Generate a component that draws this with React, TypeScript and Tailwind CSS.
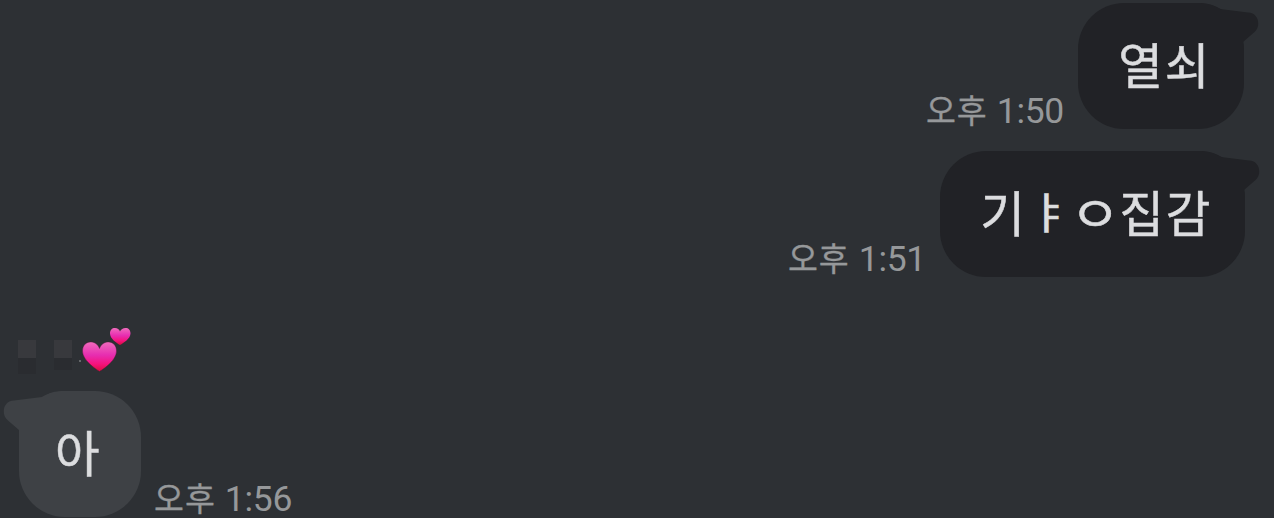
import React from 'react';
import clsx from 'clsx';

interface MessageProps {
  text: string;
  time: string;
  mine?: boolean;
  className?: string;
}

function BubbleTail({ mine }: { mine?: boolean }) {
  return (
    <svg
      viewBox="0 0 62 48"
      className={clsx(
        'absolute top-0 w-[62px] h-12',
        mine ? '-right-[15px] text-[#212226]' : '-left-4 -scale-x-100 text-[#3e4145]'
      )}
    >
      <path
        d="M0 0C11 0 16 2 23 6L51 9.500C58 10 61 14.500 61.200 20C61.400 24 60 27 57 29.500L46 39V48H0Z"
        fill="currentColor"
      />
    </svg>
  );
}

function Time({ time }: { time: string }) {
  return (
    <div className="flex items-baseline h-[40px] leading-[40px] text-[#96989a] whitespace-pre">
      <span className="text-[32.5px] tracking-[1px] [-webkit-text-stroke:0.3px_#96989a] font-['Noto_Sans_CJK_KR',sans-serif]">
        오후
      </span>
      <span className="text-[35.5px] ml-[9px] font-['Roboto',sans-serif] tracking-[-0.3px]">{time}</span>
    </div>
  );
}

function Message({ text, time, mine, className }: MessageProps) {
  return (
    <div className={clsx('flex items-end', mine && 'flex-row-reverse', className)}>
      <div
        className={clsx(
          'relative shrink-0 h-[126px] flex items-center rounded-[46px] pb-[6px]',
          mine ? 'justify-end pr-[33px] bg-[#212226]' : 'pl-[36px] bg-[#3e4145]',
          text.length === 1 && 'w-[122px]',
          text.length === 2 && 'w-[166px]',
          text.length > 2 && 'w-[305px]'
        )}
      >
        <BubbleTail mine={mine} />
        <span className="relative text-[48.5px] leading-[60px] tracking-[1.7px] whitespace-nowrap text-[#dcdddf] [-webkit-text-stroke:0.5px_#dcdddf] font-['Noto_Sans_CJK_KR',sans-serif]">
          {[...text].map((char, i) => (
            <span
              key={i}
              className={clsx(
                'inline-block',
                char === 'ㅇ' && 'scale-x-[1.14]',
                char === 'ㅑ' && 'scale-y-[0.88]'
              )}
            >
              {char}
            </span>
          ))}
        </span>
      </div>
      <div className={mine ? 'mr-[14px]' : 'ml-[13px]'}>
        <Time time={time} />
      </div>
    </div>
  );
}

function Hearts() {
  return (
    <svg viewBox="0 0 52 48" className="w-[52px] h-12">
      <defs>
        <linearGradient id="heart" x1="0" y1="0" x2="0" y2="1">
          <stop offset="0" stopColor="#f06bbd" />
          <stop offset="0.45" stopColor="#e72db0" />
          <stop offset="0.75" stopColor="#f5127c" />
          <stop offset="1" stopColor="#d80d3d" />
        </linearGradient>
      </defs>
      <path
        d="M18.500 44.500C14 41.500 1.500 33 1.500 24C1.500 18.500 5 15 9.500 15C14 15 17 17.500 18.500 21.500C20 17.500 23 15 27.500 15C32 15 35.500 18.500 35.500 24C35.500 33 23.500 41.500 18.500 44.500Z"
        fill="url(#heart)"
        stroke="#45182f"
        strokeOpacity="0.5"
        strokeWidth="0.8"
      />
      <path
        d="M39 18C35.500 16 29 11.500 29 6.500C29 3 31 1 34 1C36.500 1 38.200 2.500 39 4.500C40 2.500 42 1 44.500 1C47.500 1 49.500 3 49.500 6.500C49.500 11.500 42.500 16 39 18Z"
        fill="url(#heart)"
      />
    </svg>
  );
}

export default function App() {
  return (
    <div className="w-[1274px] h-[518px] overflow-hidden bg-[#2d3034] flex flex-col pt-[3px]">
      <Message mine text="열쇠" time="1:50" className="pr-[30px]" />
      <Message mine text="기ㅑㅇ집감" time="1:51" className="pr-[29px] mt-[22px]" />

      {/* Sender name, masked out */}
      <div className="flex items-start h-12 mt-[50px] pl-[18px]">
        <div className="w-[18px] mt-[13px]">
          <div className="h-[18px] bg-[#38393d]" />
          <div className="h-[16px] bg-[#2a2c30]" />
        </div>
        <div className="w-[18px] mt-[13px] ml-[18px]">
          <div className="h-[18px] bg-[#38393d]" />
          <div className="h-[12px] bg-[#2a2c30]" />
        </div>
        <div className="w-0.5 h-0.5 mt-[33px] ml-[7px] bg-[#65676a]" />
        <Hearts />
      </div>

      <Message text="아" time="1:56" className="pl-[19px] mt-4" />
    </div>
  );
}
